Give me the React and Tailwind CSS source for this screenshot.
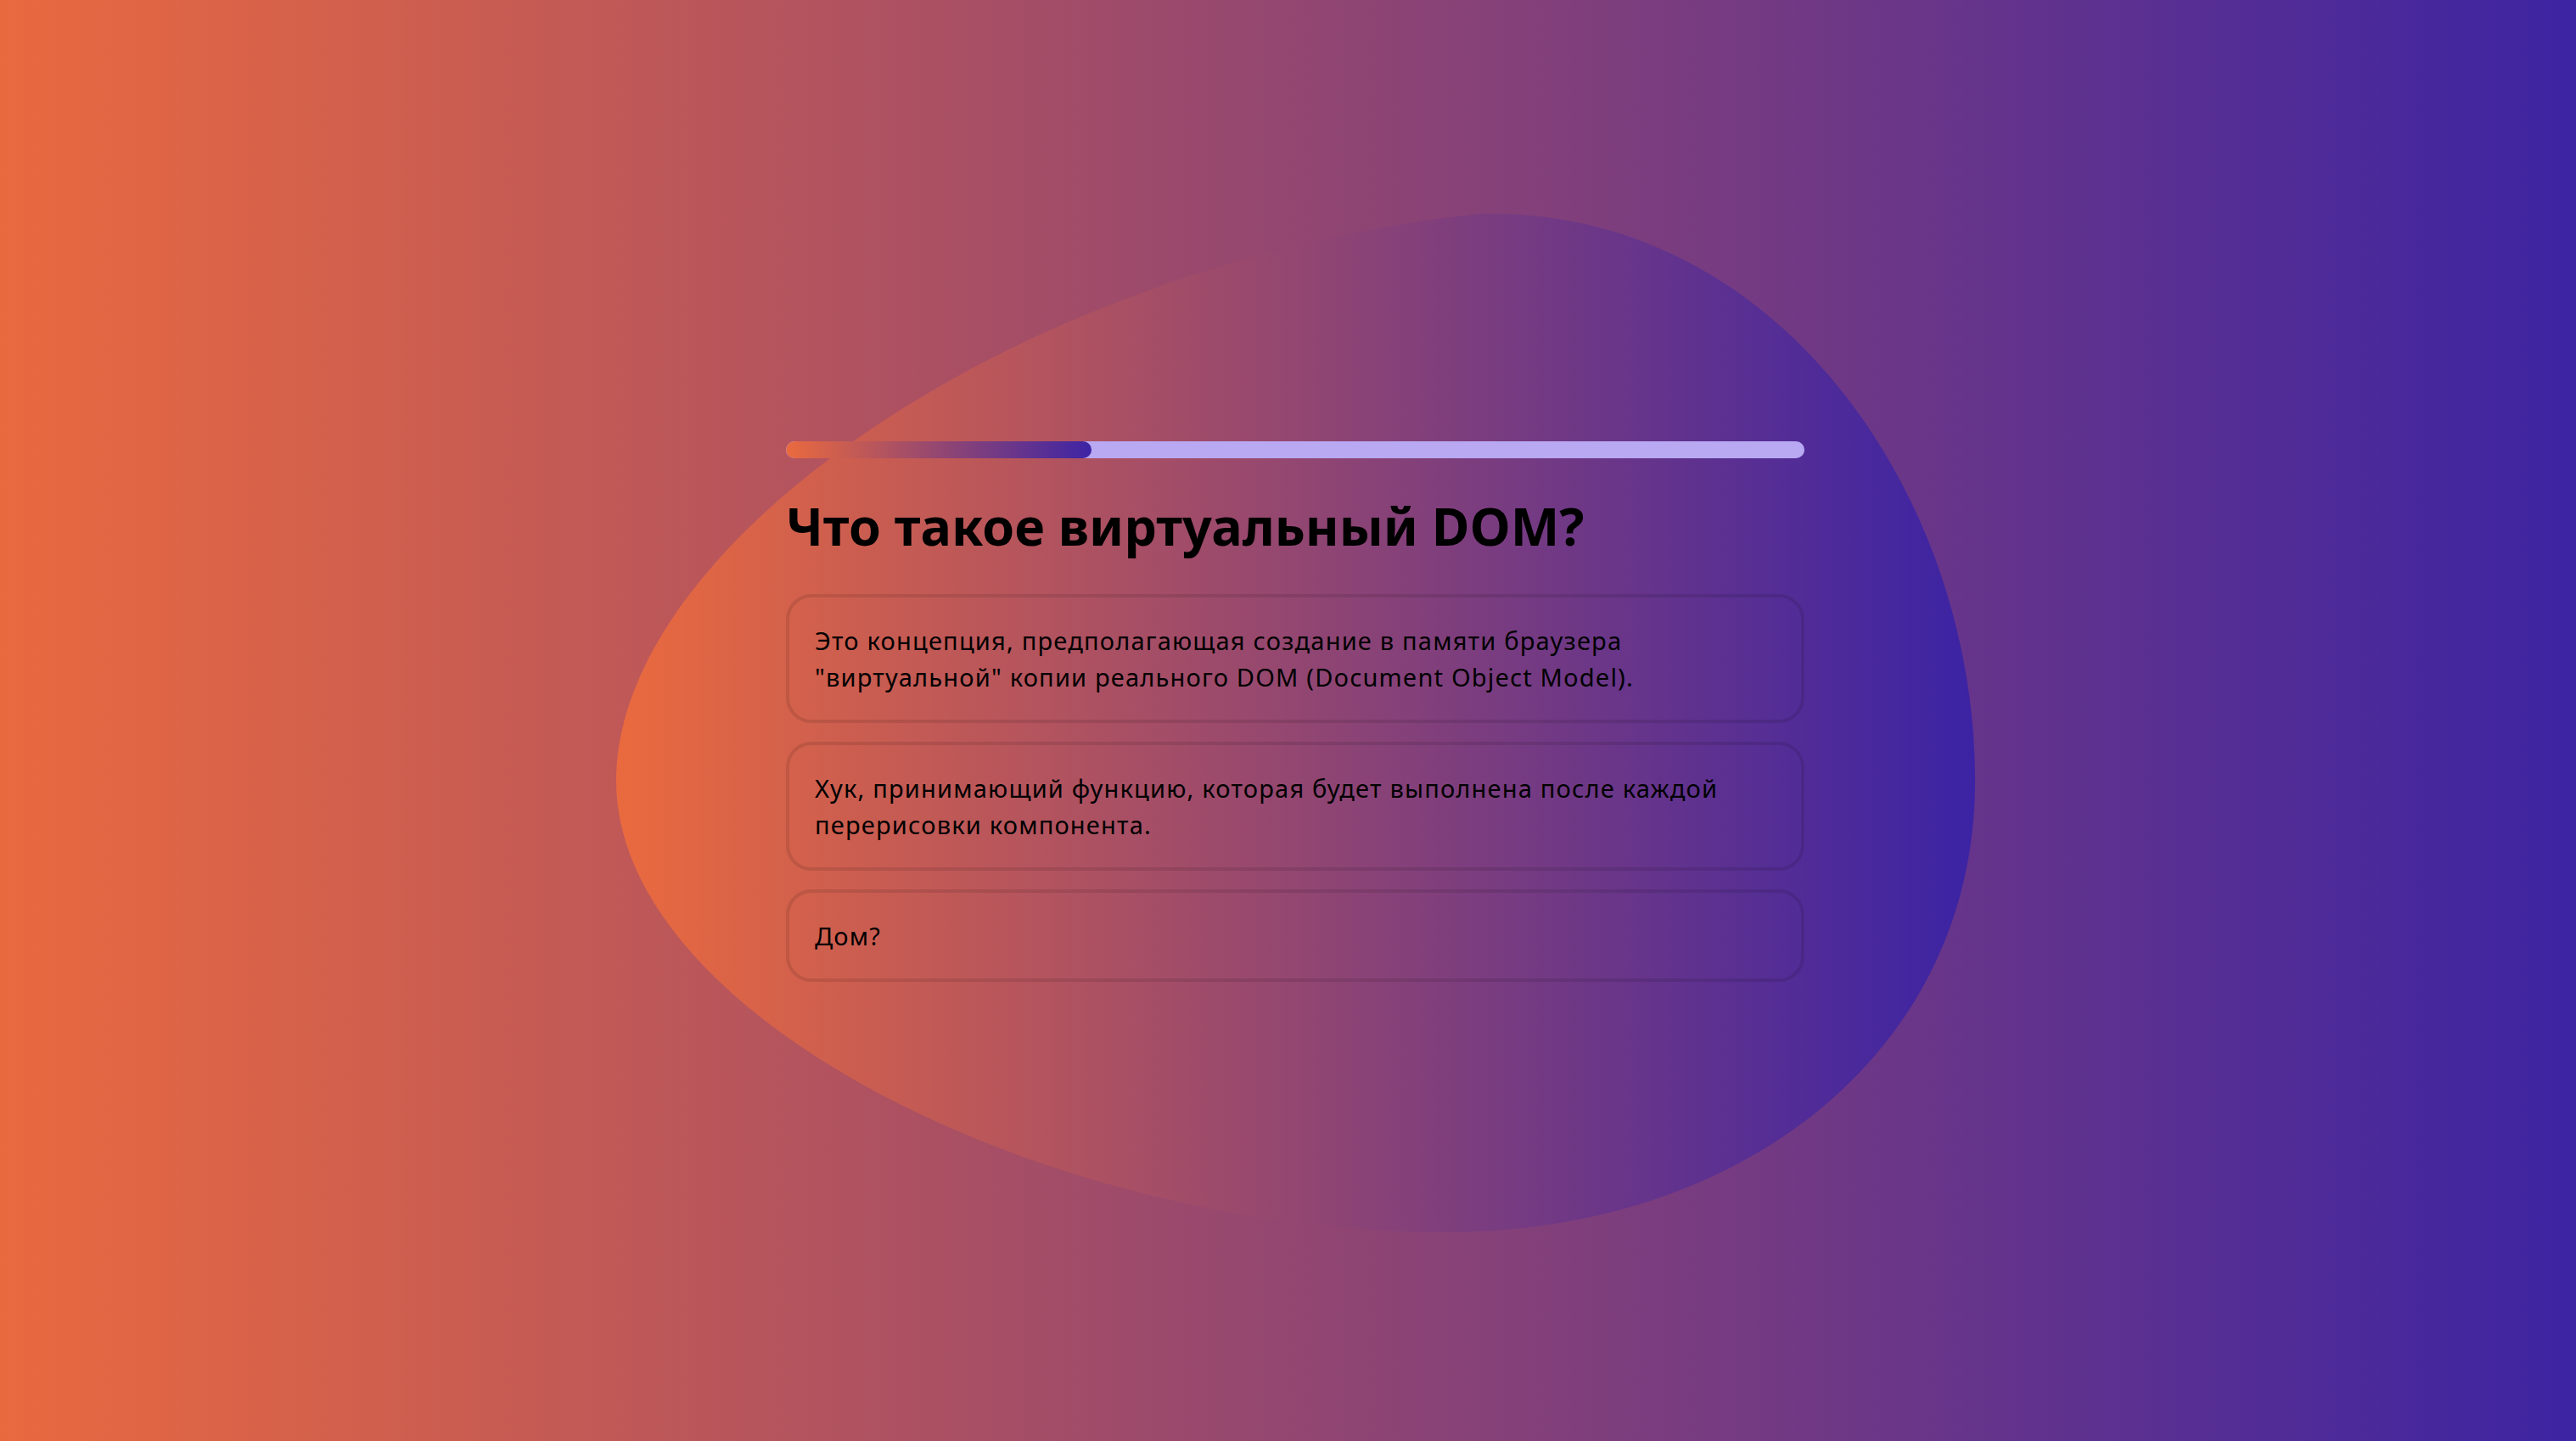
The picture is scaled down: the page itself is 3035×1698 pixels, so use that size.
const answers = [
  { id: 1, text: 'Это концепция, предполагающая создание в памяти браузера "виртуальной" копии реального DOM (Document Object Model).' },
  { id: 2, text: "Хук, принимающий функцию, которая будет выполнена после каждой перерисовки компонента." },
  { id: 3, text: "Дом?" }
];

function Blob() {
  return (
    <svg
      className="absolute left-[726px] top-[252px] w-[1601px] h-[1200px]"
      viewBox="375 130 827 620"
      preserveAspectRatio="none"
    >
      <defs>
        <linearGradient id="blobGrad" x1="0" y1="0" x2="1" y2="0">
          <stop offset="0" stopColor="#ea6a3e" />
          <stop offset="1" stopColor="#3b23a4" />
        </linearGradient>
      </defs>
      <path
        d="M375,475 C375,330 620,160 900,130 C1080,125 1202,300 1202,475 C1202,640 1060,750 880,750 C640,750 375,620 375,475 Z"
        fill="url(#blobGrad)"
      />
    </svg>
  );
}

export default function App() {
  const progress = 30;

  return (
    <div className="relative w-full h-[1698px] overflow-hidden bg-[linear-gradient(90deg,#e9693f,#3d24a2)] font-['Noto_Sans',sans-serif] text-black">
      <Blob />
      <div className="relative h-full flex items-center justify-center pl-[17px]">
        <div className="w-[1200px] mb-[22px]">
          <div className="h-[20px] rounded-full bg-[#b8a9f2] overflow-hidden">
            <div
              className="h-full rounded-full bg-[linear-gradient(90deg,#ea6a3e,#3d24a5)]"
              style={{ width: `${progress}%` }}
            />
          </div>

          <h1 className="mt-[41px] mb-[42px] text-[61px] leading-[77px] font-bold">
            Что такое виртуальный DOM?
          </h1>

          <div className="flex flex-col gap-[22px]">
            {answers.map((a) => (
              <button
                key={a.id}
                className="text-left border-4 border-black/10 rounded-[30px] px-[30px] py-[29px] text-[29px] leading-[43px] tracking-[1.2px]"
              >
                {a.text}
              </button>
            ))}
          </div>
        </div>
      </div>
    </div>
  );
}
